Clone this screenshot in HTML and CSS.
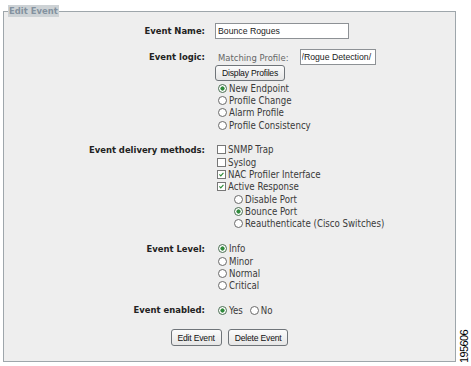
FILE: index.html
```html
<!DOCTYPE html>
<html>
<head>
    <title>Edit Event</title>
    <link rel="stylesheet" href="styles.css">
</head>
<body>
    <div class="page">
        <fieldset class="panel">
            <legend>Edit Event</legend>

            <!-- Name -->
            <div class="row first">
                <div class="label tall">Event Name:</div>
                <div class="value">
                    <input type="text" class="text-input name-input" value="Bounce Rogues">
                </div>
            </div>

            <!-- Logic -->
            <div class="row">
                <div class="label tall">Event logic:</div>
                <div class="value">
                    <div class="match">
                        <span class="muted">Matching Profile:</span>
                        <input type="text" class="text-input profile-input" value="/Rogue Detection/">
                    </div>
                    <button class="btn">Display Profiles</button>
                    <div class="opts">
                        <div class="opt"><span class="radio on"></span>New Endpoint</div>
                        <div class="opt"><span class="radio"></span>Profile Change</div>
                        <div class="opt"><span class="radio"></span>Alarm Profile</div>
                        <div class="opt"><span class="radio"></span>Profile Consistency</div>
                    </div>
                </div>
            </div>

            <!-- Delivery -->
            <div class="row">
                <div class="label">Event delivery methods:</div>
                <div class="value">
                    <div class="opt box-opt"><span class="check"></span>SNMP Trap</div>
                    <div class="opt box-opt"><span class="check"></span>Syslog</div>
                    <div class="opt box-opt"><span class="check"><svg viewBox="0 0 9 9"><path d="M1.8 4.4 L3.6 6.3 L7 2.3" /></svg></span>NAC Profiler Interface</div>
                    <div class="opt box-opt"><span class="check"><svg viewBox="0 0 9 9"><path d="M1.8 4.4 L3.6 6.3 L7 2.3" /></svg></span>Active Response</div>
                    <div class="opt sub"><span class="radio"></span>Disable Port</div>
                    <div class="opt sub"><span class="radio on"></span>Bounce Port</div>
                    <div class="opt sub"><span class="radio"></span>Reauthenticate (Cisco Switches)</div>
                </div>
            </div>

            <!-- Level -->
            <div class="row">
                <div class="label">Event Level:</div>
                <div class="value">
                    <div class="opt"><span class="radio on"></span>Info</div>
                    <div class="opt"><span class="radio"></span>Minor</div>
                    <div class="opt"><span class="radio"></span>Normal</div>
                    <div class="opt"><span class="radio"></span>Critical</div>
                </div>
            </div>

            <!-- Enabled -->
            <div class="row">
                <div class="label">Event enabled:</div>
                <div class="value inline">
                    <div class="opt"><span class="radio on"></span>Yes</div>
                    <div class="opt"><span class="radio"></span>No</div>
                </div>
            </div>

            <div class="actions">
                <button class="btn">Edit Event</button>
                <button class="btn">Delete Event</button>
            </div>
        </fieldset>

        <div class="fig-num">195606</div>
    </div>
</body>
</html>
```

FILE: styles.css
```css
/* Page frame */
body {
    margin: 0;
    background-color: #ffffff;
}

.page {
    display: flex;
    align-items: flex-end;
    padding: 5px 0 0 3px;
}

/* Edit panel */
.panel {
    width: 453px;
    box-sizing: border-box;
    margin: 0;
    padding: 6px 0 15px 0;
    border: 1px solid #9ea6ab;
    background-color: #eeeeee;
    font-family: "DejaVu Sans Condensed", "DejaVu Sans", sans-serif;
    font-stretch: condensed;
    font-size: 9.4px;
    color: #3a3a3a;
}

.panel legend {
    margin-left: 4px;
    padding: 0 1px;
    height: 12px;
    line-height: 12px;
    background-color: #cdd2d5;
    color: #8492a0;
    font-weight: bold;
}

/* Form rows */
.row {
    display: flex;
    margin-bottom: 12.5px;
}

.row.first {
    margin-bottom: 10px;
}

.label {
    width: 202px;
    flex: none;
    margin-right: 9px;
    padding-right: 1px;
    box-sizing: border-box;
    text-align: right;
    font-weight: bold;
    color: #222222;
    line-height: 12.33px;
}

.label.tall {
    line-height: 16px;
}

.value {
    display: flex;
    flex-direction: column;
    align-items: flex-start;
}

.value.inline {
    flex-direction: row;
}

.match {
    display: flex;
    align-items: center;
    height: 16px;
}

.muted {
    color: #666666;
    margin-left: 3px;
    margin-right: 11px;
}

/* Text fields and buttons */
.text-input {
    height: 16px;
    box-sizing: border-box;
    border: 1px solid #8d9195;
    background-color: #ffffff;
    font-family: "Liberation Sans", Arial, sans-serif;
    font-size: 8.7px;
    color: #222222;
    padding: 0 2px;
    margin: 0;
    outline: none;
}

.name-input {
    width: 134px;
}

.profile-input {
    width: 76px;
    padding: 0 0 0 1px;
}

.btn {
    height: 16px;
    box-sizing: border-box;
    margin: 0;
    padding: 0 6px;
    border: 1px solid #6f7479;
    border-radius: 3px;
    background: linear-gradient(#fbfbfb, #e6e6e6);
    font-family: "Liberation Sans", Arial, sans-serif;
    font-size: 8.6px;
    letter-spacing: -0.2px;
    color: #111111;
    line-height: 14px;
}

.opts {
    margin-top: 1px;
}

/* Radio and check options */
.opt {
    display: flex;
    align-items: center;
    height: 12.33px;
    margin-left: 3px;
    white-space: nowrap;
    font-size: 9.6px;
}

.opt.sub {
    margin-left: 19px;
}

.opt.box-opt {
    margin-left: 2px;
}

.value.inline .opt + .opt {
    margin-left: 7px;
}

.radio {
    width: 9px;
    height: 9px;
    box-sizing: border-box;
    border: 1px solid #6a6a6a;
    border-radius: 50%;
    background-color: #ffffff;
    margin-right: 2px;
    flex: none;
}

.radio.on {
    border-color: #4a6e52;
    background: radial-gradient(circle, #2f8a3b 0 1.8px, #ffffff 2.4px);
}

.check {
    width: 9px;
    height: 9px;
    box-sizing: border-box;
    border: 1px solid #777777;
    background-color: #ffffff;
    margin-right: 2px;
    flex: none;
    display: flex;
}

.check svg {
    width: 7px;
    height: 7px;
}

.check path {
    fill: none;
    stroke: #2b8a35;
    stroke-width: 1.4;
}

/* Bottom buttons */
.actions {
    display: flex;
    justify-content: center;
    gap: 6px;
}

.actions .btn {
    height: 17px;
}

/* Figure number */
.fig-num {
    writing-mode: vertical-rl;
    transform: rotate(180deg);
    margin-left: 3px;
    margin-bottom: -1px;
    font-family: "Liberation Sans", Arial, sans-serif;
    font-size: 11px;
    letter-spacing: -0.6px;
    line-height: 10px;
    color: #000000;
}
```
